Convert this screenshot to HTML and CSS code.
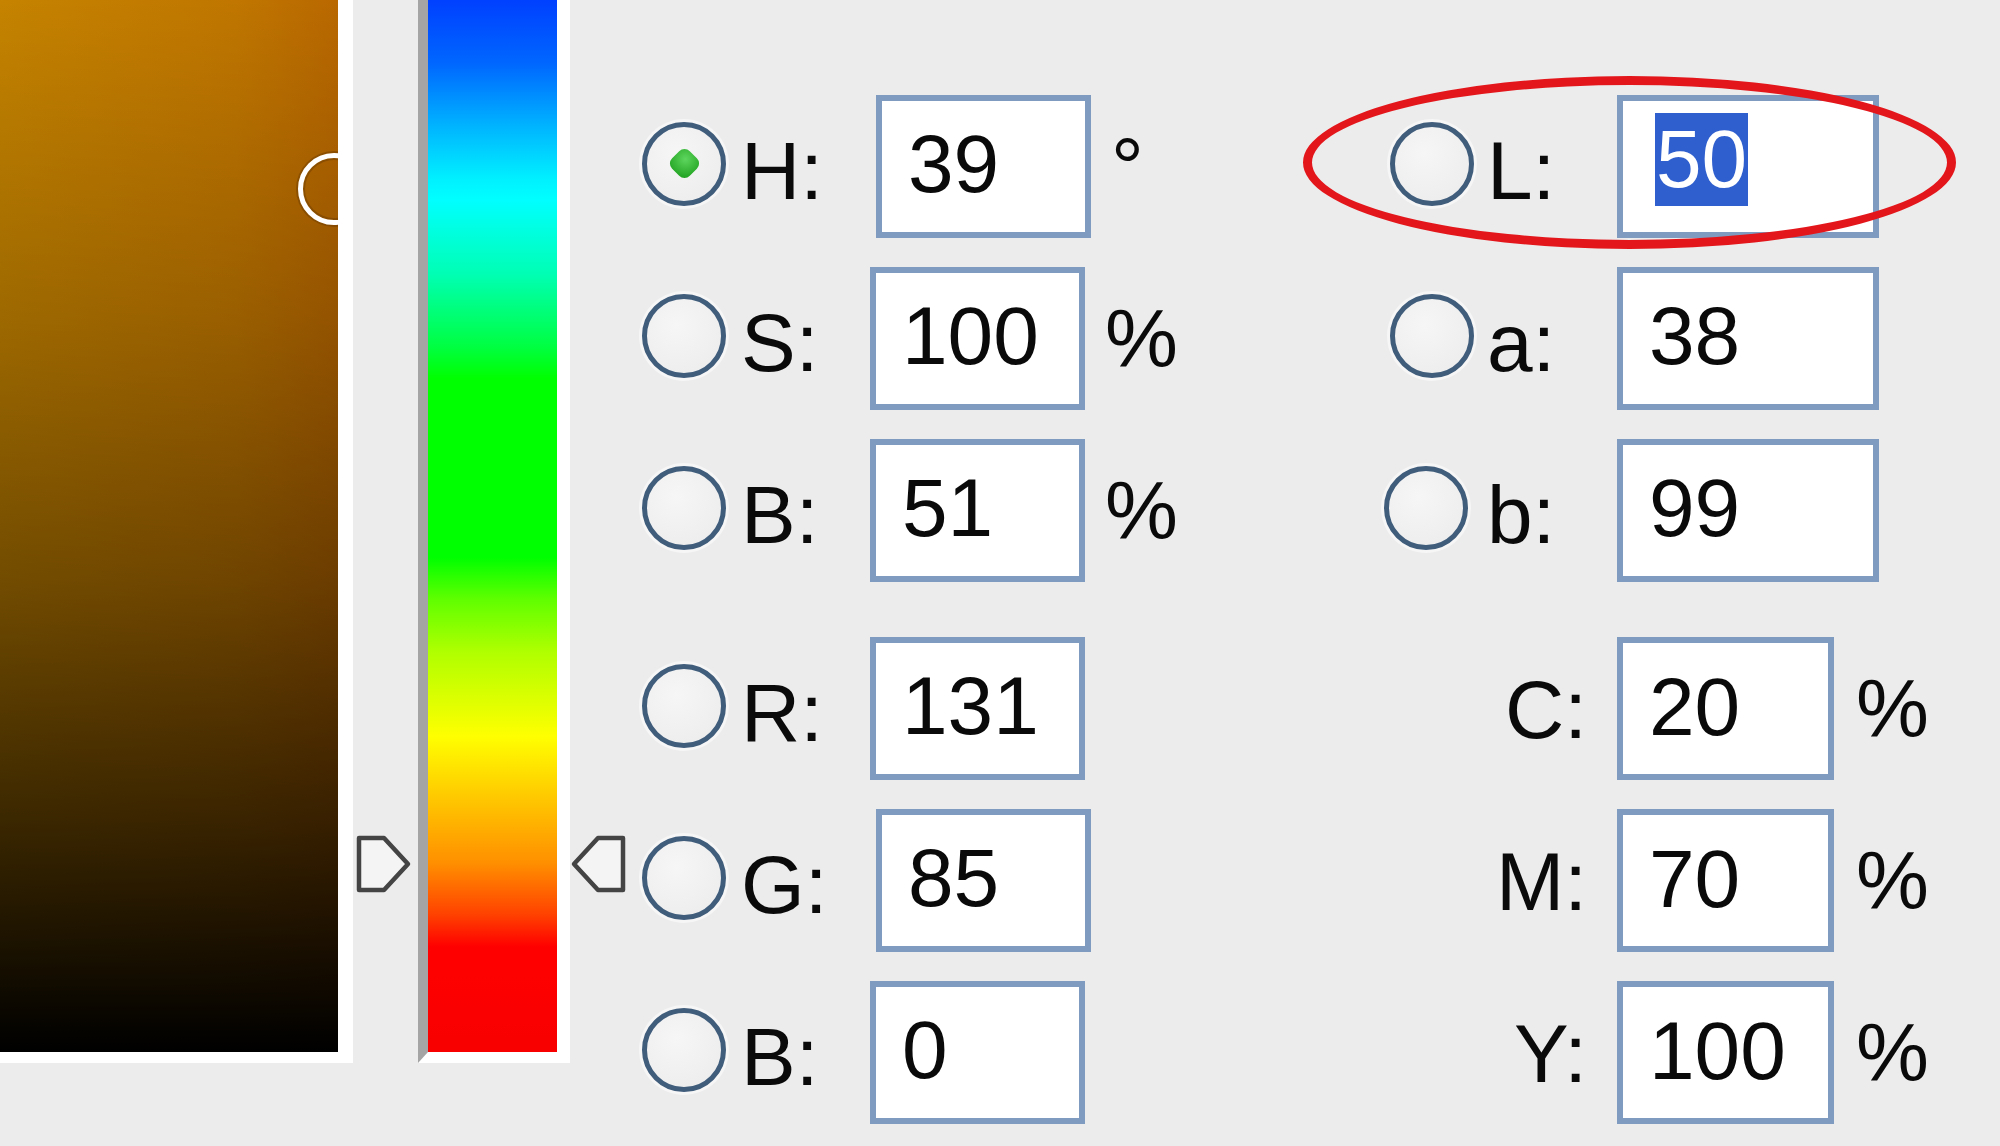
FILE: index.html
```html
<!DOCTYPE html>
<html lang="en">
<head>
    <meta charset="UTF-8">
    <title>Color Picker</title>
    <link rel="stylesheet" href="styles.css">
</head>
<body>

<div class="picker">
    <!-- Saturation / brightness field -->
    <div class="field">
        <span class="field-marker"></span>
    </div>

    <!-- Hue slider -->
    <div class="hue">
        <svg class="hue-arrow hue-arrow-left" viewBox="0 0 56 58">
            <polygon points="3,3 28,3 52,29 28,55 3,55" />
        </svg>
        <div class="hue-bar"></div>
        <svg class="hue-arrow hue-arrow-right" viewBox="0 0 56 58">
            <polygon points="53,3 28,3 4,29 28,55 53,55" />
        </svg>
    </div>

    <!-- Numeric values -->
    <div class="values">
        <div class="group group-left">
            <div class="row">
                <span class="radio checked"></span>
                <span class="label label-shift">H:</span>
                <div class="box"><span class="num">39</span></div>
                <span class="unit">°</span>
            </div>
            <div class="row">
                <span class="radio"></span>
                <span class="label">S:</span>
                <div class="box"><span class="num">100</span></div>
                <span class="unit">%</span>
            </div>
            <div class="row">
                <span class="radio"></span>
                <span class="label">B:</span>
                <div class="box"><span class="num">51</span></div>
                <span class="unit">%</span>
            </div>
            <div class="row row-split">
                <span class="radio"></span>
                <span class="label">R:</span>
                <div class="box"><span class="num">131</span></div>
            </div>
            <div class="row">
                <span class="radio"></span>
                <span class="label label-shift">G:</span>
                <div class="box"><span class="num">85</span></div>
            </div>
            <div class="row">
                <span class="radio"></span>
                <span class="label">B:</span>
                <div class="box"><span class="num">0</span></div>
            </div>
        </div>

        <div class="group group-right">
            <div class="row">
                <span class="radio"></span>
                <span class="label label-lab">L:</span>
                <div class="box box-wide"><span class="num selected">50</span></div>
            </div>
            <div class="row">
                <span class="radio"></span>
                <span class="label label-lab">a:</span>
                <div class="box box-wide"><span class="num">38</span></div>
            </div>
            <div class="row">
                <span class="radio radio-nudge"></span>
                <span class="label label-lab">b:</span>
                <div class="box box-wide"><span class="num">99</span></div>
            </div>
            <div class="row row-split">
                <span class="label label-cmyk">C:</span>
                <div class="box box-cmyk"><span class="num">20</span></div>
                <span class="unit unit-cmyk">%</span>
            </div>
            <div class="row">
                <span class="label label-cmyk">M:</span>
                <div class="box box-cmyk"><span class="num">70</span></div>
                <span class="unit unit-cmyk">%</span>
            </div>
            <div class="row">
                <span class="label label-cmyk">Y:</span>
                <div class="box box-cmyk"><span class="num">100</span></div>
                <span class="unit unit-cmyk">%</span>
            </div>
        </div>
    </div>

    <!-- Red annotation round the L field -->
    <div class="callout"></div>
</div>

</body>
</html>
```

FILE: styles.css
```css
body {
    margin: 0;
    background-color: #ececec;
    font-family: 'Liberation Sans', Arial, sans-serif;
    font-size: 82px;
    line-height: 1;
    color: #0a0a0a;
    overflow: hidden;
}
.picker {
    position: relative;
    display: flex;
    align-items: flex-start;
    height: 1146px;
}

/* colour field */
.field {
    position: relative;
    width: 338px;
    height: 1052px;
    border-right: 15px solid #fff;
    border-bottom: 11px solid #fff;
    overflow: hidden;
    background:
        linear-gradient(to bottom, rgba(0,0,0,0) 0%, rgba(0,0,0,0.2) 30%, rgba(0,0,0,0.42) 55%, rgba(0,0,0,0.7) 78%, #000 100%),
        linear-gradient(to right, #c58300, #c07600 70%, #b96800);
}
.field-marker {
    position: absolute;
    left: 298px;
    top: 153px;
    width: 62px;
    height: 62px;
    border: 5px solid #fff;
    border-radius: 50%;
    box-shadow: 0 0 0 2px rgba(90, 50, 0, 0.35), inset 0 0 0 2px rgba(90, 50, 0, 0.35);
}

/* hue slider */
.hue {
    position: relative;
    padding-left: 65px;
}
.hue-bar {
    width: 129px;
    height: 1052px;
    border-left: 10px solid #a4a4a4;
    border-right: 13px solid #fff;
    border-bottom: 11px solid #fff;
    background: linear-gradient(to bottom,
        #0040ff 0%, #0066ff 6%, #00b4ff 12%, #00f0ff 17%, #00ffff 19%,
        #00ffb4 26%, #00ff40 33%, #00ff00 36%, #00ff00 53%,
        #60ff00 57%, #b0ff00 62%, #ffff00 70%, #ffd000 75%,
        #ff9000 82%, #ff4000 87%, #ff0000 90%, #f80000 100%);
}
.hue-arrow {
    position: absolute;
    top: 835px;
    width: 56px;
    height: 58px;
}
.hue-arrow polygon {
    fill: #f4f4f4;
    stroke: #444;
    stroke-width: 4.5;
    stroke-linejoin: round;
}
.hue-arrow-left {
    left: 3px;
}
.hue-arrow-right {
    left: 217px;
}

/* value rows */
.values {
    display: flex;
    margin-left: 72px;
    padding-top: 95px;
}
.group {
    display: flex;
    flex-direction: column;
    gap: 29px;
}
.group-left {
    width: 748px;
}
.row {
    display: flex;
    align-items: center;
    height: 143px;
}
.row-split {
    margin-top: 26px;
}
.radio {
    display: flex;
    align-items: center;
    justify-content: center;
    flex: none;
    width: 74px;
    height: 74px;
    margin-bottom: 6px;
    border: 5px solid #405d7c;
    border-radius: 50%;
    background: radial-gradient(circle at 40% 35%, #f6f6f6, #ebebeb);
    box-shadow: 0 0 0 3px rgba(255, 255, 255, 0.5);
}
.radio.checked::after {
    content: '';
    width: 25px;
    height: 25px;
    border-radius: 30%;
    background: radial-gradient(circle at 40% 35%, #5ed65e, #179a17);
    transform: rotate(45deg);
}
.radio-nudge {
    margin-left: -6px;
    margin-right: 6px;
}
.label {
    width: 144px;
    padding-left: 15px;
    padding-top: 8px;
    box-sizing: border-box;
}
.label-shift {
    width: 150px;
}
.label-lab {
    width: 143px;
    padding-left: 13px;
}
.label-cmyk {
    width: 227px;
    padding-left: 0;
    padding-right: 30px;
    padding-top: 2px;
    text-align: right;
}
.box {
    display: flex;
    align-items: center;
    width: 215px;
    height: 143px;
    box-sizing: border-box;
    border: 6px solid #7f9cc0;
    background-color: #fff;
    padding-left: 26px;
    padding-bottom: 6px;
}
.box-wide {
    width: 262px;
}
.box-cmyk {
    width: 217px;
    padding-bottom: 4px;
}
.selected {
    margin-left: 6px;
    margin-bottom: 8px;
    padding: 5px 1px 6px;
    background-color: #2f5fce;
    color: #fff;
}
.unit {
    margin-left: 20px;
}
.unit-cmyk {
    margin-left: 22px;
}

/* annotation */
.callout {
    position: absolute;
    left: 1303px;
    top: 76px;
    width: 653px;
    height: 173px;
    box-sizing: border-box;
    border: 9px solid #e3161b;
    border-radius: 50%;
}
```
